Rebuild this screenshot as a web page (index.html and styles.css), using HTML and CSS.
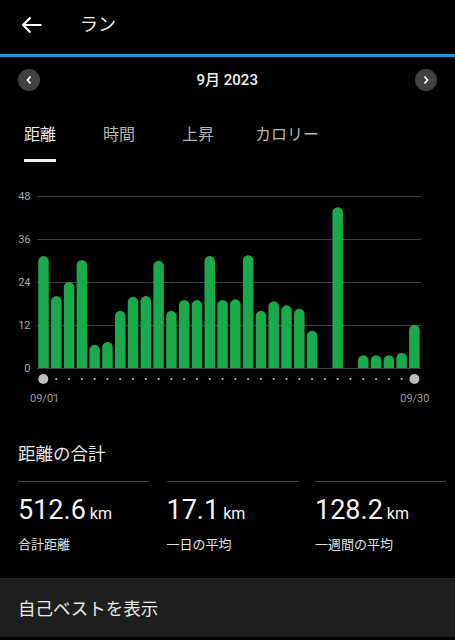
FILE: index.html
```html
<!DOCTYPE html>
<html lang="ja">
<head>
<meta charset="utf-8">
<title>ラン</title>
<link rel="stylesheet" href="styles.css">
</head>
<body>
<div class="screen">
  <header class="topbar">
    <svg class="back" width="22" height="18" viewBox="0 0 22 18" aria-hidden="true">
      <path d="M2 9H20.5M9.5 1.5L2 9L9.5 16.5" fill="none" stroke="#fff" stroke-width="2.1"/>
    </svg>
    <h1 class="title">ラン</h1>
  </header>
  <div class="accent"></div>

  <div class="month">
    <span class="nav">
      <svg width="8" height="10" viewBox="0 0 8 10"><path d="M5.5 1.5L2.5 5L5.5 8.5" fill="none" stroke="#fff" stroke-width="1.7"/></svg>
    </span>
    <span class="month-label">9月 2023</span>
    <span class="nav">
      <svg width="8" height="10" viewBox="0 0 8 10"><path d="M2.5 1.5L5.5 5L2.5 8.5" fill="none" stroke="#fff" stroke-width="1.7"/></svg>
    </span>
  </div>

  <nav class="tabs">
    <span class="tab active">距離</span>
    <span class="tab">時間</span>
    <span class="tab">上昇</span>
    <span class="tab tab-wide">カロリー</span>
  </nav>

  <svg class="chart" width="455" height="250" viewBox="0 162 455 250">
    <defs>
      <clipPath id="plot"><rect x="0" y="150" width="455" height="218"/></clipPath>
    </defs>
    <g class="grid">
      <line x1="37" y1="196.5" x2="421" y2="196.5"/>
      <line x1="37" y1="239.5" x2="421" y2="239.5"/>
      <line x1="37" y1="282.5" x2="421" y2="282.5"/>
      <line x1="37" y1="325.5" x2="421" y2="325.5"/>
      <line x1="37" y1="368.5" x2="421" y2="368.5"/>
    </g>
    <g class="axis">
      <text x="30.5" y="200">48</text>
      <text x="30.5" y="243">36</text>
      <text x="30.5" y="286">24</text>
      <text x="30.5" y="329">12</text>
      <text x="30.5" y="372">0</text>
    </g>
    <g class="bars" clip-path="url(#plot)">
      <rect x="38.25" y="256" width="10.5" height="120" rx="5.25"/>
      <rect x="51.04" y="296" width="10.5" height="80" rx="5.25"/>
      <rect x="63.83" y="282" width="10.5" height="94" rx="5.25"/>
      <rect x="76.62" y="260" width="10.5" height="116" rx="5.25"/>
      <rect x="89.41" y="344.7" width="10.5" height="32" rx="5.25"/>
      <rect x="102.2" y="342" width="10.5" height="34" rx="5.25"/>
      <rect x="114.99" y="310.7" width="10.5" height="66" rx="5.25"/>
      <rect x="127.78" y="296.7" width="10.5" height="80" rx="5.25"/>
      <rect x="140.57" y="296" width="10.5" height="80" rx="5.25"/>
      <rect x="153.36" y="260.7" width="10.5" height="116" rx="5.25"/>
      <rect x="166.15" y="310.7" width="10.5" height="66" rx="5.25"/>
      <rect x="178.94" y="300" width="10.5" height="76" rx="5.25"/>
      <rect x="191.73" y="300" width="10.5" height="76" rx="5.25"/>
      <rect x="204.52" y="256" width="10.5" height="120" rx="5.25"/>
      <rect x="217.31" y="300" width="10.5" height="76" rx="5.25"/>
      <rect x="230.1" y="299.3" width="10.5" height="77" rx="5.25"/>
      <rect x="242.89" y="255.3" width="10.5" height="121" rx="5.25"/>
      <rect x="255.68" y="310.7" width="10.5" height="66" rx="5.25"/>
      <rect x="268.47" y="301.3" width="10.5" height="75" rx="5.25"/>
      <rect x="281.26" y="305.3" width="10.5" height="71" rx="5.25"/>
      <rect x="294.05" y="308.7" width="10.5" height="68" rx="5.25"/>
      <rect x="306.84" y="330.7" width="10.5" height="46" rx="5.25"/>
      <rect x="332.42" y="207.3" width="10.5" height="169" rx="5.25"/>
      <rect x="358" y="355.3" width="10.5" height="21" rx="5.25"/>
      <rect x="370.79" y="355.3" width="10.5" height="21" rx="5.25"/>
      <rect x="383.58" y="355.3" width="10.5" height="21" rx="5.25"/>
      <rect x="396.37" y="352.7" width="10.5" height="24" rx="5.25"/>
      <rect x="409.16" y="324.7" width="10.5" height="52" rx="5.25"/>
    </g>
    <g class="ticks">
      <circle cx="56.29" cy="379" r="1.1"/>
      <circle cx="69.08" cy="379" r="1.1"/>
      <circle cx="81.87" cy="379" r="1.1"/>
      <circle cx="94.66" cy="379" r="1.1"/>
      <circle cx="107.45" cy="379" r="1.1"/>
      <circle cx="120.24" cy="379" r="1.1"/>
      <circle cx="133.03" cy="379" r="1.1"/>
      <circle cx="145.82" cy="379" r="1.1"/>
      <circle cx="158.61" cy="379" r="1.1"/>
      <circle cx="171.4" cy="379" r="1.1"/>
      <circle cx="184.19" cy="379" r="1.1"/>
      <circle cx="196.98" cy="379" r="1.1"/>
      <circle cx="209.77" cy="379" r="1.1"/>
      <circle cx="222.56" cy="379" r="1.1"/>
      <circle cx="235.35" cy="379" r="1.1"/>
      <circle cx="248.14" cy="379" r="1.1"/>
      <circle cx="260.93" cy="379" r="1.1"/>
      <circle cx="273.72" cy="379" r="1.1"/>
      <circle cx="286.51" cy="379" r="1.1"/>
      <circle cx="299.3" cy="379" r="1.1"/>
      <circle cx="312.09" cy="379" r="1.1"/>
      <circle cx="324.88" cy="379" r="1.1"/>
      <circle cx="337.67" cy="379" r="1.1"/>
      <circle cx="350.46" cy="379" r="1.1"/>
      <circle cx="363.25" cy="379" r="1.1"/>
      <circle cx="376.04" cy="379" r="1.1"/>
      <circle cx="388.83" cy="379" r="1.1"/>
      <circle cx="401.62" cy="379" r="1.1"/>
      <circle class="end" cx="43.3" cy="379" r="5"/>
      <circle class="end" cx="414.4" cy="379" r="5"/>
    </g>
    <g class="dates">
      <text x="30" y="402">09/01</text>
      <text x="429.5" y="402" text-anchor="end">09/30</text>
    </g>
  </svg>

  <section class="summary">
    <h2 class="summary-title">距離の合計</h2>
    <div class="stats">
      <div class="stat">
        <div class="value">512.6<span class="unit">km</span></div>
        <div class="label">合計距離</div>
      </div>
      <div class="stat">
        <div class="value">17.1<span class="unit">km</span></div>
        <div class="label">一日の平均</div>
      </div>
      <div class="stat">
        <div class="value">128.2<span class="unit">km</span></div>
        <div class="label">一週間の平均</div>
      </div>
    </div>
  </section>

  <div class="best">自己ベストを表示</div>
</div>
</body>
</html>
```

FILE: styles.css
```css
* { box-sizing: border-box; }

html, body {
  margin: 0;
  padding: 0;
  background: #000;
}

body {
  font-family: Roboto, "Noto Sans CJK JP", sans-serif;
  color: #fff;
  width: 455px;
  height: 640px;
  overflow: hidden;
}

.screen {
  display: flex;
  flex-direction: column;
  height: 640px;
}

.topbar {
  height: 54px;
  padding: 0 0 5px 21px;
  display: flex;
  align-items: center;
}

.back { display: block; }

.title {
  margin: 0 0 0 37px;
  font-size: 18px;
  font-weight: 400;
  line-height: 24px;
  color: #f2f2f2;
}

.accent {
  height: 3px;
  background: #1d97d6;
}

.month {
  height: 46px;
  padding: 0 18px 0 17.5px;
  display: flex;
  align-items: center;
  justify-content: space-between;
}

.nav {
  width: 22px;
  height: 22px;
  border-radius: 50%;
  background: #414141;
  display: flex;
  align-items: center;
  justify-content: center;
}

.nav svg { display: block; }

.month-label {
  font-size: 15px;
  font-weight: 500;
  color: #f0f0f0;
  line-height: 20px;
}

.tabs {
  display: flex;
  padding-left: 24px;
  gap: 47px;
}

.tab {
  padding: 20px 0 12px;
  font-size: 16px;
  line-height: 24px;
  color: #b4b4b4;
  border-bottom: 3px solid transparent;
}

.tab.active {
  color: #ececec;
  border-bottom-color: #f0f0f0;
}

.tab-wide { margin-left: -6px; }

.chart { display: block; }

.grid line {
  stroke: #3c3c3c;
  stroke-width: 1;
}

.axis text {
  font-family: Roboto, sans-serif;
  font-size: 11px;
  fill: #a8a8a8;
  text-anchor: end;
}

.bars rect { fill: #1aa94b; }

.ticks circle { fill: #b8b8b8; }
.ticks circle.end { fill: #bdbdbd; }

.dates text {
  font-family: Roboto, sans-serif;
  font-size: 11px;
  fill: #9c9c9c;
}

.summary {
  padding: 0 0 0 18px;
}

.summary-title {
  margin: 29px 0 0;
  font-size: 17.5px;
  font-weight: 400;
  line-height: 26px;
  color: #e6e6e6;
}

.stats {
  margin-top: 14px;
  display: grid;
  grid-template-columns: repeat(3, 131px);
  column-gap: 17.5px;
}

.stat {
  border-top: 1px solid #4a4a4a;
  padding-top: 12px;
}

.value {
  font-size: 27px;
  line-height: 32px;
  color: #f4f4f4;
}

.unit {
  font-size: 16px;
  margin-left: 4px;
}

.label {
  margin-top: 6px;
  font-size: 13px;
  line-height: 18px;
  color: #e0e0e0;
}

.best {
  margin-top: 24px;
  height: 59px;
  flex-shrink: 0;
  background: #1e1e1e;
  padding-left: 18px;
  display: flex;
  align-items: center;
  font-size: 17.5px;
  color: #e8e8e8;
}
```
